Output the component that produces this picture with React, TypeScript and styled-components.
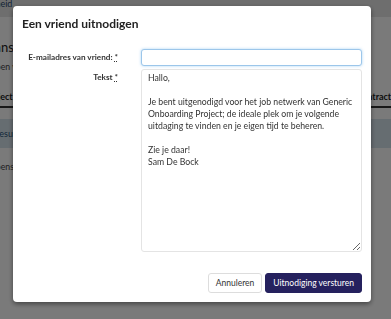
import React from 'react'
import styled, { createGlobalStyle } from 'styled-components'

const GlobalStyle = createGlobalStyle`
  html, body {
    margin: 0;
    padding: 0;
  }
  body {
    font-family: Lato, "Open Sans", "Noto Sans", sans-serif;
    background: #fff;
    color: #333;
    overflow: hidden;
  }
  * {
    box-sizing: border-box;
  }
`

/* page behind the dialog */

const Page = styled.div`
  width: 391px;
  height: 319px;
  overflow: hidden;
  background: #fff;
`

const TopBar = styled.div`
  height: 17px;
  background: #e6e6e6;
  display: flex;
  align-items: flex-start;
`

const Peek = styled.span<{ $shift: number }>`
  display: block;
  margin-left: ${({ $shift }) => $shift}px;
  white-space: nowrap;
`

const NavText = styled(Peek)`
  font-size: 9px;
  line-height: 9px;
  color: #2a4a6e;
  margin-top: -1px;
`

const Heading = styled(Peek)`
  margin-top: 22px;
  font-size: 13px;
  line-height: 16px;
  color: #222;
`

const SubText = styled(Peek)`
  margin-top: 6px;
  font-size: 8.7px;
  line-height: 12px;
  color: #444;
`

const Tabs = styled.div`
  margin-top: 15px;
  display: flex;
  gap: 57px;
  border-bottom: 2px solid #333;
  white-space: nowrap;
`

const Tab = styled.span<{ $shift?: number }>`
  margin-left: ${({ $shift }) => $shift ?? 0}px;
  height: 18px;
  line-height: 18px;
  font-size: 9px;
  font-weight: 700;
  color: #222;
`

const Band = styled.div`
  margin-top: 11px;
  height: 29px;
  background: #d6e3ec;
  display: flex;
  align-items: center;
`

const BandText = styled(Peek)`
  font-size: 9px;
  color: #2c557a;
`

const RowText = styled(Peek)`
  margin-top: 13px;
  font-size: 8.7px;
  line-height: 12px;
  color: #444;
`

/* dialog */

const Overlay = styled.div`
  position: fixed;
  inset: 0;
  background: rgba(0, 0, 0, 0.52);
  display: flex;
  align-items: flex-start;
  padding: 6px 20px 0 13px;
`

const Modal = styled.div`
  width: 358px;
  height: 296px;
  background: #fff;
  border-radius: 4px;
  box-shadow: 0 2px 5px rgba(0, 0, 0, 0.45);
  display: flex;
  flex-direction: column;
  padding: 10px 9px 9px;
`

const Title = styled.h2`
  margin: 0;
  font-size: 12px;
  line-height: 16px;
  font-weight: 700;
  color: #222;
`

const Form = styled.div`
  margin-top: 17px;
  display: grid;
  grid-template-columns: 96px 221px;
  column-gap: 23px;
  row-gap: 3px;
`

const Label = styled.label`
  justify-self: end;
  padding-top: 2px;
  font-size: 8.2px;
  line-height: 12px;
  font-weight: 700;
  color: #333;
  white-space: nowrap;
`

const Required = styled.abbr`
  text-decoration: underline dotted;
  text-underline-offset: 1px;
`

const Input = styled.input`
  height: 17px;
  width: 100%;
  border: 1px solid #9cc6ea;
  border-radius: 3px;
  box-shadow: 0 0 3px rgba(102, 175, 233, 0.55);
  outline: none;
  padding: 0 6px;
  font: inherit;
  font-size: 8.7px;
`

const TextArea = styled.textarea`
  height: 183px;
  width: 100%;
  border: 1px solid #e4e4e4;
  border-radius: 3px;
  padding: 2px 6px;
  font-family: Lato, "Open Sans", sans-serif;
  font-size: 8.7px;
  line-height: 12px;
  color: #333;
  outline: none;
`

const Footer = styled.div`
  margin-top: 21px;
  display: flex;
  justify-content: flex-end;
  gap: 3px;
`

const Button = styled.button<{ $primary?: boolean }>`
  height: 20px;
  padding: 0 7px;
  border-radius: 3px;
  border: 1px solid ${({ $primary }) => ($primary ? '#25215e' : '#ddd')};
  background: ${({ $primary }) => ($primary ? '#25215e' : '#fff')};
  color: ${({ $primary }) => ($primary ? '#fff' : '#333')};
  font-family: Lato, "Open Sans", sans-serif;
  font-size: 8.5px;
  cursor: pointer;
`

const message = `Hallo,

Je bent uitgenodigd voor het job netwerk van Generic Onboarding Project; de ideale plek om je volgende uitdaging te vinden en je eigen tijd te beheren.

Zie je daar!
Sam De Bock`

export default function App() {
  return (
    <>
      <GlobalStyle />
      <Page>
        <TopBar>
          <NavText $shift={-35}>Gezondheid</NavText>
        </TopBar>
        <Heading $shift={-14}>Kansen</Heading>
        <SubText $shift={-11}>Open vacatures</SubText>
        <Tabs>
          <Tab $shift={-16}>Project</Tab>
          <Tab>Kandidaten</Tab>
          <Tab>Planning</Tab>
          <Tab>Facturen</Tab>
          <Tab>Contracten</Tab>
        </Tabs>
        <Band>
          <BandText $shift={-6}>Resultaten</BandText>
        </Band>
        <RowText $shift={-11}>Openstaande</RowText>
      </Page>
      <Overlay>
        <Modal role="dialog" aria-labelledby="invite-title">
          <Title id="invite-title">Een vriend uitnodigen</Title>
          <Form>
            <Label htmlFor="email">
              E-mailadres van vriend: <Required title="verplicht">*</Required>
            </Label>
            <Input id="email" type="email" />
            <Label htmlFor="text">
              Tekst <Required title="verplicht">*</Required>
            </Label>
            <TextArea id="text" defaultValue={message} />
          </Form>
          <Footer>
            <Button>Annuleren</Button>
            <Button $primary>Uitnodiging versturen</Button>
          </Footer>
        </Modal>
      </Overlay>
    </>
  )
}
